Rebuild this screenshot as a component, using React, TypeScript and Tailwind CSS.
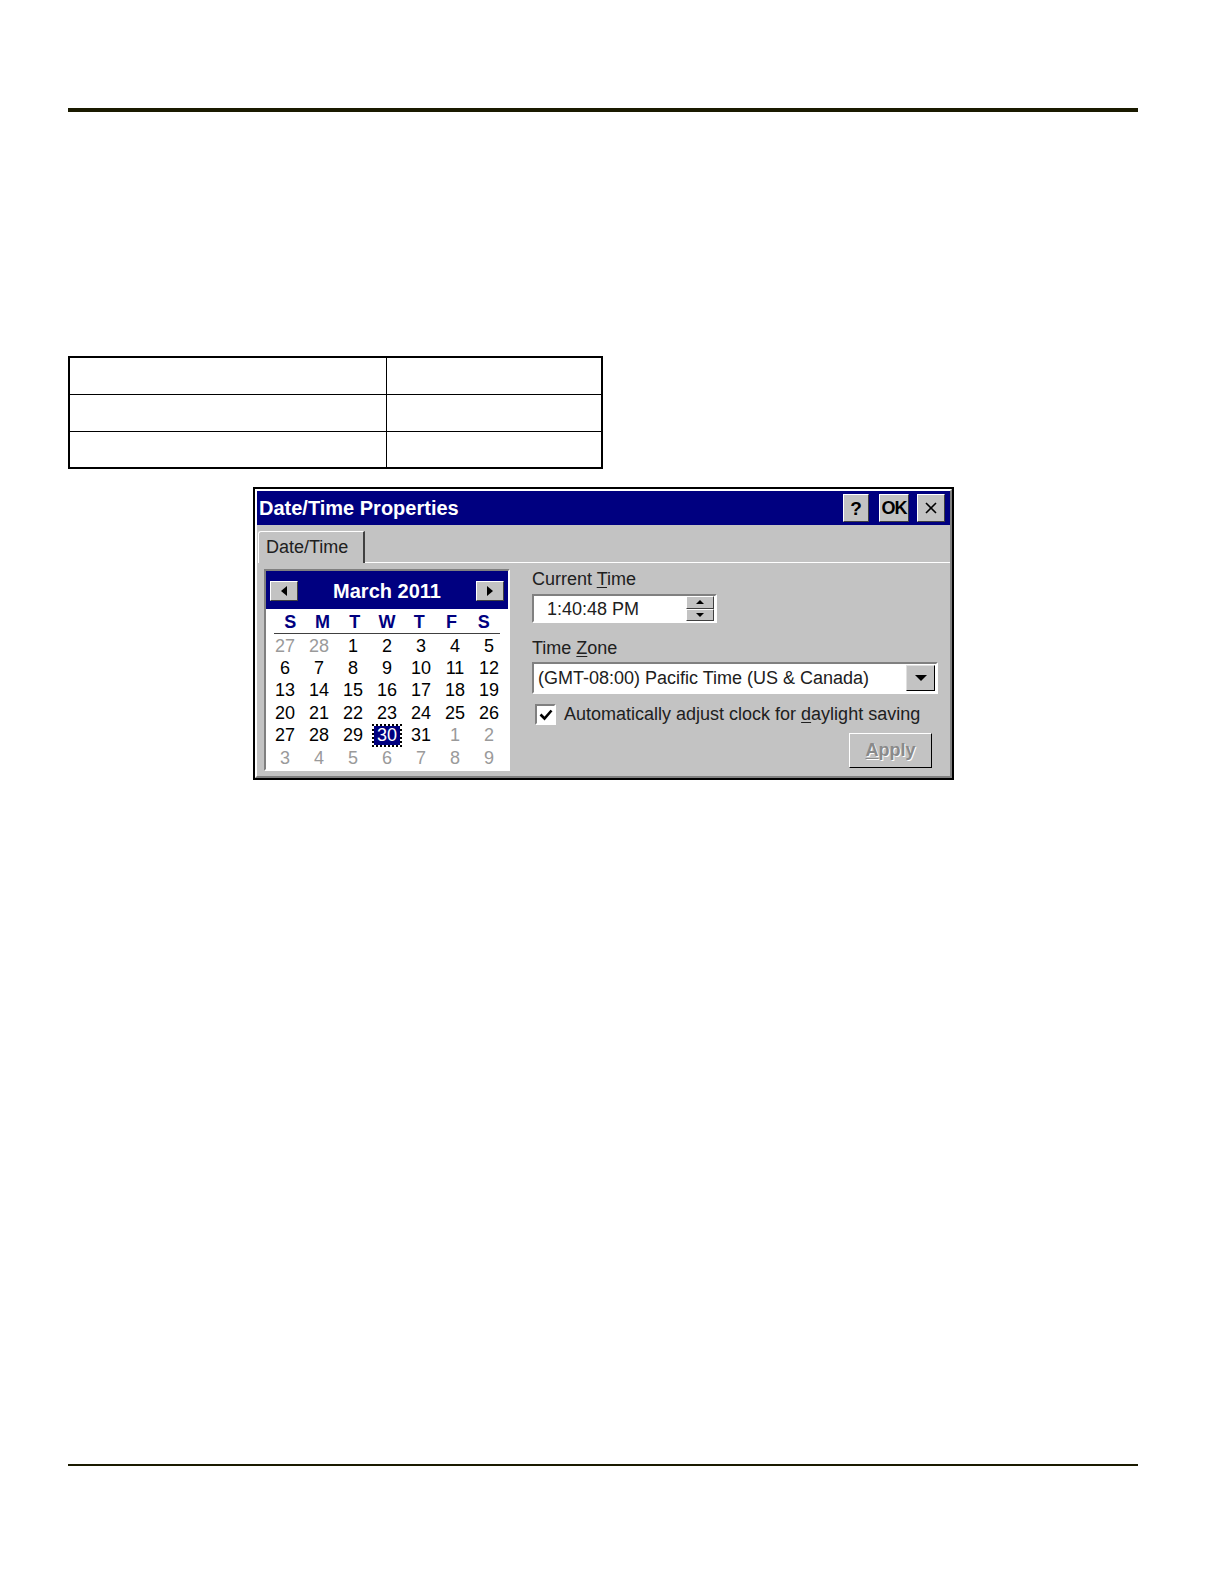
const font = "font-['Liberation_Sans',Arial,sans-serif]";

const raised = "border border-t-white border-l-white border-r-[#404040] border-b-[#404040]";
const sunken = "border-2 border-t-[#808080] border-l-[#808080] border-r-white border-b-white";

function TitleButton({ children, w }: { children: React.ReactNode; w: string }) {
  return (
    <div
      className={`${w} h-[28px] bg-[#c3c3c3] ${raised} flex items-center justify-center text-black font-bold text-[19px] leading-none`}
    >
      {children}
    </div>
  );
}

function Arrow({ dir }: { dir: "left" | "right" }) {
  return (
    <div className={`w-[28px] h-[20px] bg-[#c3c3c3] ${raised} flex items-center justify-center`}>
      <svg width="6" height="10" viewBox="0 0 6 10">
        {dir === "left" ? <polygon points="6,0 6,10 0,5" fill="#000" /> : <polygon points="0,0 0,10 6,5" fill="#000" />}
      </svg>
    </div>
  );
}

const weeks: { d: number; dim?: boolean }[][] = [
  [{ d: 27, dim: true }, { d: 28, dim: true }, { d: 1 }, { d: 2 }, { d: 3 }, { d: 4 }, { d: 5 }],
  [{ d: 6 }, { d: 7 }, { d: 8 }, { d: 9 }, { d: 10 }, { d: 11 }, { d: 12 }],
  [{ d: 13 }, { d: 14 }, { d: 15 }, { d: 16 }, { d: 17 }, { d: 18 }, { d: 19 }],
  [{ d: 20 }, { d: 21 }, { d: 22 }, { d: 23 }, { d: 24 }, { d: 25 }, { d: 26 }],
  [{ d: 27 }, { d: 28 }, { d: 29 }, { d: 30 }, { d: 31 }, { d: 1, dim: true }, { d: 2, dim: true }],
  [
    { d: 3, dim: true }, { d: 4, dim: true }, { d: 5, dim: true }, { d: 6, dim: true },
    { d: 7, dim: true }, { d: 8, dim: true }, { d: 9, dim: true },
  ],
];

function Calendar() {
  return (
    <div className={`w-[246px] h-[202px] ${sunken} bg-white flex flex-col`}>
      <div className="h-[38px] bg-[#000080] flex items-center justify-between px-[4px] pt-[2px]">
        <Arrow dir="left" />
        <span className="text-white font-bold text-[20px]">March 2011</span>
        <Arrow dir="right" />
      </div>
      <div className="mt-[3px] mx-[8px] grid grid-cols-7 border-b border-[#404040] h-[22px]">
        {["S", "M", "T", "W", "T", "F", "S"].map((h, i) => (
          <div key={i} className="text-center text-[#000080] font-bold text-[18px] leading-[21px]">
            {h}
          </div>
        ))}
      </div>
      <div className="ml-[2px] grid grid-cols-7 w-[238px] auto-rows-[22.4px] mt-[1px]">
        {weeks.flat().map((c, i) =>
          c.d === 30 && !c.dim ? (
            <div key={i} className="flex items-center justify-center">
              <span className="bg-[#000080] text-white text-[18px] leading-[19px] px-[3px] outline-2 outline-dotted outline-black">
                30
              </span>
            </div>
          ) : (
            <div
              key={i}
              className={`text-center text-[18px] leading-[22.4px] ${c.dim ? "text-[#9a9a9a]" : "text-black"}`}
            >
              {c.d}
            </div>
          )
        )}
      </div>
    </div>
  );
}

function Tri({ down }: { down?: boolean }) {
  return (
    <svg width="8" height="4" viewBox="0 0 8 4">
      {down ? <polygon points="0,0 8,0 4,4" fill="#000" /> : <polygon points="0,4 8,4 4,0" fill="#000" />}
    </svg>
  );
}

function Dialog() {
  return (
    <div className={`ml-[185px] mt-[18px] w-[701px] h-[293px] border-2 border-black bg-[#c3c3c3] ${font}`}>
      <div className="h-full border-2 border-t-white border-l-white border-r-[#808080] border-b-[#808080] flex flex-col">
        <div className="h-[34px] bg-[#000080] flex items-center justify-between pl-[2px] pr-[5px]">
          <span className="text-white font-bold text-[20px]">Date/Time Properties</span>
          <div className="flex items-center">
            <TitleButton w="w-[26px]">?</TitleButton>
            <div className="w-[10px]" />
            <TitleButton w="w-[30px]">
              <span className="text-[18px] tracking-[-1px]">OK</span>
            </TitleButton>
            <div className="w-[8px]" />
            <TitleButton w="w-[28px]">
              <svg width="14" height="14" viewBox="0 0 14 14">
                <path d="M2 2 L12 12 M12 2 L2 12" stroke="#000" strokeWidth="1.6" />
              </svg>
            </TitleButton>
          </div>
        </div>
        <div className="h-[38px] flex items-end">
          <div className="ml-[1px] h-[32px] w-[107px] border-t border-l border-white border-r-2 border-r-[#404040] rounded-tl-[3px] flex items-center pl-[7px] text-[18px] text-[#202020]">
            Date/Time
          </div>
          <div className="flex-1 border-b border-white" />
        </div>
        <div className="flex pl-[7px] pt-[6px]">
          <Calendar />
          <div className="ml-[22px] flex flex-col text-[18px] text-[#202020]">
            <div className="leading-[20px]">
              Current <span className="underline underline-offset-2">T</span>ime
            </div>
            <div className={`mt-[5px] w-[185px] h-[29px] ${sunken} bg-white flex items-center`}>
              <span className="flex-1 pl-[13px] leading-none">1:40:48 PM</span>
              <div className="w-[28px] h-[25px] flex flex-col mr-[1px]">
                <div className={`flex-1 bg-[#c3c3c3] ${raised} flex items-center justify-center`}>
                  <Tri />
                </div>
                <div className={`flex-1 bg-[#c3c3c3] ${raised} flex items-center justify-center`}>
                  <Tri down />
                </div>
              </div>
            </div>
            <div className="mt-[15px] leading-[20px]">
              Time <span className="underline underline-offset-2">Z</span>one
            </div>
            <div className={`mt-[4px] w-[406px] h-[32px] ${sunken} bg-white flex items-center`}>
              <span className="flex-1 pl-[4px] leading-none">(GMT-08:00) Pacific Time (US &amp; Canada)</span>
              <div className="w-[29px] h-[26px] mr-[1px] bg-[#c3c3c3] border border-t-[#e0e0e0] border-l-[#e0e0e0] border-r-black border-b-black flex items-center justify-center">
                <svg width="12" height="6" viewBox="0 0 12 6">
                  <polygon points="0,0 12,0 6,6" fill="#000" />
                </svg>
              </div>
            </div>
            <div className="mt-[7px] flex items-center">
              <div className={`ml-[3px] w-[21px] h-[21px] ${sunken} bg-white flex items-center justify-center`}>
                <svg width="14" height="12" viewBox="0 0 14 12">
                  <path d="M1.5 5.5 L5.5 9.5 L12.5 1.5" stroke="#000" strokeWidth="2.6" fill="none" />
                </svg>
              </div>
              <span className="ml-[8px]">
                Automatically adjust clock for <span className="underline underline-offset-2">d</span>aylight saving
              </span>
            </div>
            <div className="flex justify-end mr-[6px] mt-[5px]">
              <div className="w-[83px] h-[35px] border border-t-white border-l-white border-r-black border-b-black bg-[#c3c3c3] flex items-center justify-center">
                <span className="font-bold text-[18px] text-[#8a8a8a] [text-shadow:1px_1px_0_#fff]">
                  <span className="underline underline-offset-2">A</span>pply
                </span>
              </div>
            </div>
          </div>
        </div>
      </div>
    </div>
  );
}

export default function App() {
  return (
    <div className="w-[1224px] h-[1584px] bg-white">
      <div className="pt-[108px] pl-[68px]">
        <div className="w-[1070px] h-[4px] bg-[#1a1a00]" />
        <table className="mt-[244px] w-[535px] border-collapse border-2 border-black">
          <tbody>
            {[0, 1, 2].map((r) => (
              <tr key={r} className="h-[37px]">
                <td className="w-[317px] border border-black" />
                <td className="border border-black" />
              </tr>
            ))}
          </tbody>
        </table>
        <Dialog />
        <div className="mt-[684px] w-[1070px] h-[2px] bg-[#1a1a00]" />
      </div>
    </div>
  );
}
